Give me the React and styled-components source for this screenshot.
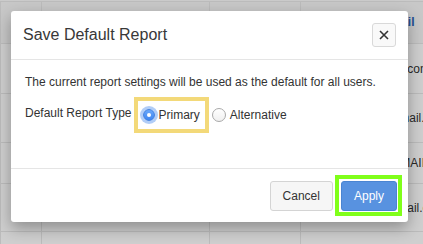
import React, {useState} from 'react'
import styled, {createGlobalStyle} from 'styled-components'

const GlobalStyle = createGlobalStyle`
  body {
    margin: 0;
    font-family: "Liberation Sans", Helvetica, Arial, sans-serif;
    color: #333;
    overflow: hidden;
  }
`

const rows = [
  {h: 49, email: 'andrews.wilson@consolidated.com'},
  {h: 48, email: 'robert.hughs@gmail.com'},
  {h: 40, email: 'CONTACT BY EMAIL'},
  {h: 47, email: 'patricia.rose@gmail.com'},
  {h: 36, name: 'Nina', dot: true, email: ''},
]

const App = () => {
  const [type, setType] = useState('primary')

  return (
    <>
      <GlobalStyle />
      <Page>
        <Table>
          <HeadRow>
            <Cell w={41} />
            <Cell w={168} />
            <Cell w={91} />
            <HeadCell w={196}>Email</HeadCell>
          </HeadRow>
          {rows.map((r, i) => (
            <Row key={i} h={r.h}>
              <Cell w={41}>{r.dot && <RedDot />}</Cell>
              <Cell w={168} />
              <Cell w={91}>{r.name}</Cell>
              <Cell w={196}>{r.email}</Cell>
            </Row>
          ))}
        </Table>
        <Backdrop />

        <Modal>
          <Header>
            <Title>Save Default Report</Title>
            <CloseButton aria-label="Close">
              <svg width="10" height="10" viewBox="0 0 10 10">
                <path d="M1 1 L9 9 M9 1 L1 9" stroke="#333" strokeWidth="1.6" />
              </svg>
            </CloseButton>
          </Header>

          <Body>
            <Intro>The current report settings will be used as the default for all users.</Intro>
            <TypeRow>
              <TypeLabel>Default Report Type</TypeLabel>
              <Highlight color="#f3d979" pad="0 5px 0 3px">
                <Option onClick={() => setType('primary')}>
                  <Radio checked={type === 'primary'} focused />
                  Primary
                </Option>
              </Highlight>
              <Option onClick={() => setType('alternative')} style={{marginLeft: 3}}>
                <Radio checked={type === 'alternative'} />
                Alternative
              </Option>
            </TypeRow>
          </Body>

          <Footer>
            <Button>Cancel</Button>
            <Highlight color="#80ff1a" pad="2px 1px 1px 2px" offset="-6px">
              <Button primary>Apply</Button>
            </Highlight>
          </Footer>
        </Modal>
      </Page>
    </>
  )
}

export default App;

const Page = styled.div`
position: relative;
width: 423px;
height: 244px;
overflow: hidden;
background: #fff;
`

const Table = styled.div`
display: flex;
flex-direction: column;
border-top: 1px solid #fafafa;
`

const Row = styled.div`
display: flex;
height: ${({h}) => h}px;
border-top: 1px solid #e8e8e8;
font-size: 12px;
color: #333;
`

const HeadRow = styled(Row)`
height: 41px;
background: #f7f7f7;
`

const Cell = styled.div`
flex: 0 0 ${({w}) => w}px;
display: flex;
align-items: center;
padding: 0 12px;
box-sizing: border-box;
border-left: 1px solid #e8e8e8;
white-space: nowrap;
overflow: hidden;
`

const HeadCell = styled(Cell)`
justify-content: center;
color: #2a63b8;
font-weight: bold;
padding-bottom: 2px;
`

const RedDot = styled.span`
width: 4px;
height: 4px;
border-radius: 50%;
background: #d32626;
margin: 18px 0 0 2px;
`

const Backdrop = styled.div`
position: absolute;
inset: 0;
background: rgba(0, 0, 0, 0.19);
`

const Modal = styled.div`
position: absolute;
top: 11px;
left: 11px;
width: 397px;
background: #fff;
border-radius: 3px;
box-shadow: 0 6px 16px rgba(0, 0, 0, 0.32);
`

const Header = styled.div`
display: flex;
align-items: center;
justify-content: space-between;
height: 48px;
padding: 0 12px;
border-bottom: 1px solid #e5e5e5;
`

const Title = styled.h2`
margin: 0;
font-size: 16px;
font-weight: normal;
color: #383838;
`

const CloseButton = styled.button`
width: 24px;
height: 24px;
padding: 0;
display: flex;
align-items: center;
justify-content: center;
background: #f9f9f9;
border: 1px solid #d9d9d9;
border-radius: 3px;
`

const Body = styled.div`
padding: 14px 14px 35px;
font-size: 12px;
`

const Intro = styled.p`
margin: 0;
line-height: 16px;
color: #333;
`

const TypeRow = styled.div`
display: flex;
align-items: center;
margin-top: 7px;
`

const TypeLabel = styled.span`
margin: 0 2px 4px 0;
`

const Highlight = styled.span`
display: flex;
align-items: center;
padding: ${({pad}) => pad};
border: 4px solid ${({color}) => color};
margin: ${({offset}) => (offset ? `${offset} 0 -5px` : '0')};
`

const Option = styled.label`
display: flex;
align-items: center;
height: 28px;
`

const Radio = styled.span`
width: ${({checked}) => (checked ? 12 : 14)}px;
height: ${({checked}) => (checked ? 12 : 14)}px;
border-radius: 50%;
margin: 0 4px 0 ${({checked}) => (checked ? 2 : 0)}px;
box-sizing: border-box;
display: flex;
align-items: center;
justify-content: center;
background: ${({checked}) => (checked ? 'linear-gradient(#6aa8fb, #3f86f0)' : 'linear-gradient(#fff, #f0f0f0)')};
border: 1px solid ${({checked}) => (checked ? '#3f7fe0' : '#a9a9a9')};
box-shadow: ${({focused}) => (focused ? '0 0 0 3px rgba(100, 155, 240, 0.5)' : 'none')};

&::after {
  content: '';
  width: 4px;
  height: 4px;
  border-radius: 50%;
  background: #fff;
  display: ${({checked}) => (checked ? 'block' : 'none')};
}
`

const Footer = styled.div`
display: flex;
justify-content: flex-end;
align-items: center;
gap: 2px;
padding: 12px 6px 11px 12px;
border-top: 1px solid #e5e5e5;
`

const Button = styled.button`
height: 30px;
padding: 0 12px;
font-family: inherit;
font-size: 12px;
border-radius: 3px;
color: ${({primary}) => (primary ? '#fff' : '#333')};
background: ${({primary}) => (primary ? '#5892e0' : '#f6f6f6')};
border: 1px solid ${({primary}) => (primary ? '#4a84d2' : '#d4d4d4')};
`
